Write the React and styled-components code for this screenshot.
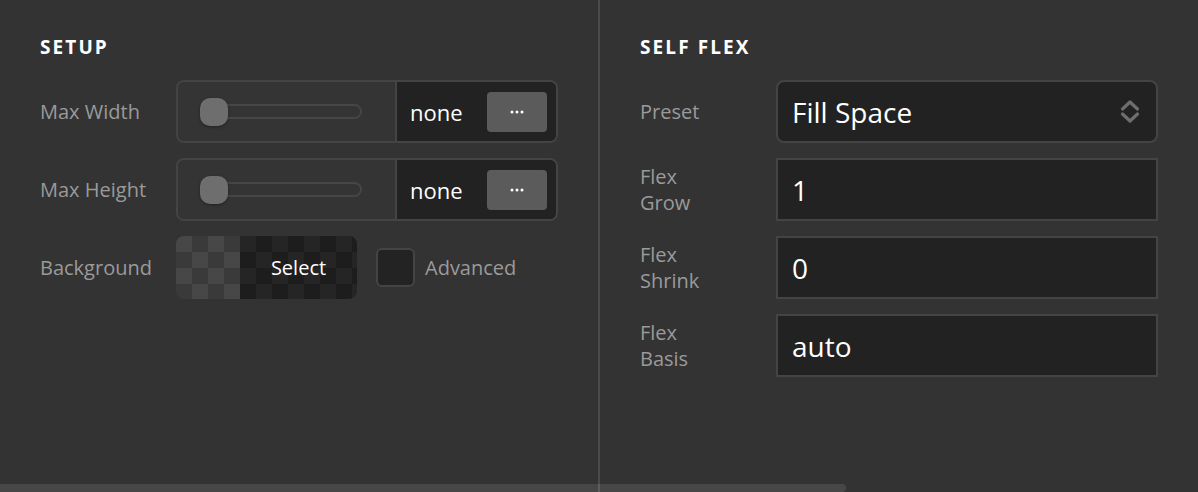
import React from "react";
import styled, { createGlobalStyle } from "styled-components";

const GlobalStyle = createGlobalStyle`
  html, body {
    margin: 0;
    padding: 0;
    background: #333333;
    font-family: "Open Sans", "Noto Sans", sans-serif;
  }
`;

const Page = styled.div`
  position: relative;
  width: 1198px;
  height: 492px;
  display: flex;
  overflow: hidden;
  background: #333333;
`;

const Panel = styled.section`
  box-sizing: border-box;
  padding: 35px 40px 0 40px;
  border-right: ${(p) => (p.$divider ? "2px solid #4b4b4b" : "none")};
  flex: ${(p) => (p.$divider ? "0 0 600px" : "1")};
`;

const Title = styled.h2`
  margin: 0 0 21px 0;
  font-size: 19px;
  line-height: 24px;
  font-weight: 700;
  letter-spacing: 2.1px;
  color: #ffffff;
`;

const Rows = styled.div`
  display: flex;
  flex-direction: column;
  gap: 15px;
`;

const Row = styled.div`
  display: grid;
  grid-template-columns: 136px 382px;
  align-items: center;
  height: 63px;
`;

const Label = styled.div`
  font-size: 20px;
  line-height: 26px;
  color: #9a9a9a;
  padding-top: 1px;
`;

const UnitBox = styled.div`
  display: flex;
  height: 63px;
  box-sizing: border-box;
  border: 2px solid #444444;
  border-radius: 8px;
  overflow: hidden;
`;

const SliderPart = styled.div`
  position: relative;
  width: 217px;
  background: #343434;
  border-right: 2px solid #444444;
  display: flex;
  align-items: center;
`;

const Track = styled.div`
  position: absolute;
  left: 30px;
  width: 154px;
  height: 15px;
  box-sizing: border-box;
  border: 2px solid #464646;
  border-radius: 8px;
`;

const Knob = styled.div`
  position: absolute;
  left: 22px;
  width: 28px;
  height: 28px;
  border-radius: 10px;
  background: #6e6e6e;
  box-shadow: 0 1px 3px rgba(0, 0, 0, 0.35);
`;

const ValuePart = styled.div`
  flex: 1;
  display: flex;
  align-items: center;
  justify-content: space-between;
  background: #222222;
  padding: 0 9px 0 13px;
`;

const Value = styled.span`
  font-size: 22px;
  color: #ffffff;
`;

const MoreButton = styled.button`
  display: flex;
  align-items: center;
  justify-content: center;
  width: 60px;
  height: 40px;
  border: none;
  border-radius: 4px;
  background: #5b5b5b;
  padding: 0;
`;

const BgRow = styled.div`
  display: flex;
  align-items: center;
  gap: 19px;
`;

const Swatch = styled.div`
  display: flex;
  width: 181px;
  height: 63px;
  border-radius: 8px;
  overflow: hidden;
`;

const Checker = styled.div`
  width: ${(p) => p.$w || "auto"};
  flex: ${(p) => (p.$w ? "0 0 auto" : "1")};
  display: flex;
  align-items: center;
  justify-content: center;
  background: repeating-conic-gradient(
      ${(p) => p.$a} 0 25%,
      ${(p) => p.$b} 0 50%
    )
    0 0 / 32px 32px;
  color: #ffffff;
  font-size: 20px;
`;

const CheckWrap = styled.label`
  display: flex;
  align-items: center;
  gap: 10px;
`;

const CheckBox = styled.span`
  width: 39px;
  height: 39px;
  box-sizing: border-box;
  border: 2px solid #444444;
  border-radius: 6px;
  background: #232323;
`;

const Field = styled.div`
  display: flex;
  align-items: center;
  justify-content: space-between;
  height: 63px;
  box-sizing: border-box;
  border: 2px solid #444444;
  border-radius: ${(p) => (p.$rounded ? "8px" : "0")};
  background: #222222;
  padding: 0 16px 0 14px;
  font-size: 28px;
  color: #ffffff;
`;

const Dots = () => (
  <svg width="14" height="4" viewBox="0 0 14 4">
    <circle cx="2" cy="2" r="1.5" fill="#ffffff" />
    <circle cx="7" cy="2" r="1.5" fill="#ffffff" />
    <circle cx="12" cy="2" r="1.5" fill="#ffffff" />
  </svg>
);

const Chevrons = () => (
  <svg width="20" height="27" viewBox="0 0 20 27" fill="none">
    <path
      d="M2.5 11 L10 4 L17.5 11"
      stroke="#6e6e6e"
      strokeWidth="3.2"
      strokeLinecap="round"
      strokeLinejoin="round"
    />
    <path
      d="M2.5 16 L10 23 L17.5 16"
      stroke="#6e6e6e"
      strokeWidth="3.2"
      strokeLinecap="round"
      strokeLinejoin="round"
    />
  </svg>
);

const Scrollbar = styled.div`
  position: absolute;
  left: 0;
  bottom: 0;
  width: 846px;
  height: 8px;
  border-radius: 0 4px 4px 0;
  background: rgba(255, 255, 255, 0.1);
`;

const UnitControl = ({ value }) => (
  <UnitBox>
    <SliderPart>
      <Track />
      <Knob />
    </SliderPart>
    <ValuePart>
      <Value>{value}</Value>
      <MoreButton>
        <Dots />
      </MoreButton>
    </ValuePart>
  </UnitBox>
);

const flexFields = [
  ["Flex", "Grow", "1"],
  ["Flex", "Shrink", "0"],
  ["Flex", "Basis", "auto"],
];

export default function App() {
  return (
    <>
      <GlobalStyle />
      <Page>
        <Panel $divider>
          <Title>SETUP</Title>
          <Rows>
            <Row>
              <Label>Max Width</Label>
              <UnitControl value="none" />
            </Row>
            <Row>
              <Label>Max Height</Label>
              <UnitControl value="none" />
            </Row>
            <Row>
              <Label>Background</Label>
              <BgRow>
                <Swatch>
                  <Checker $w="64px" $a="#3a3a3a" $b="#474747" />
                  <Checker $a="#1d1d1d" $b="#252525">
                    Select
                  </Checker>
                </Swatch>
                <CheckWrap>
                  <CheckBox />
                  <Label>Advanced</Label>
                </CheckWrap>
              </BgRow>
            </Row>
          </Rows>
        </Panel>
        <Panel>
          <Title>SELF FLEX</Title>
          <Rows>
            <Row>
              <Label>Preset</Label>
              <Field $rounded>
                <span>Fill Space</span>
                <Chevrons />
              </Field>
            </Row>
            {flexFields.map(([a, b, v]) => (
              <Row key={b}>
                <Label>
                  {a}
                  <br />
                  {b}
                </Label>
                <Field>{v}</Field>
              </Row>
            ))}
          </Rows>
        </Panel>
        <Scrollbar />
      </Page>
    </>
  );
}
